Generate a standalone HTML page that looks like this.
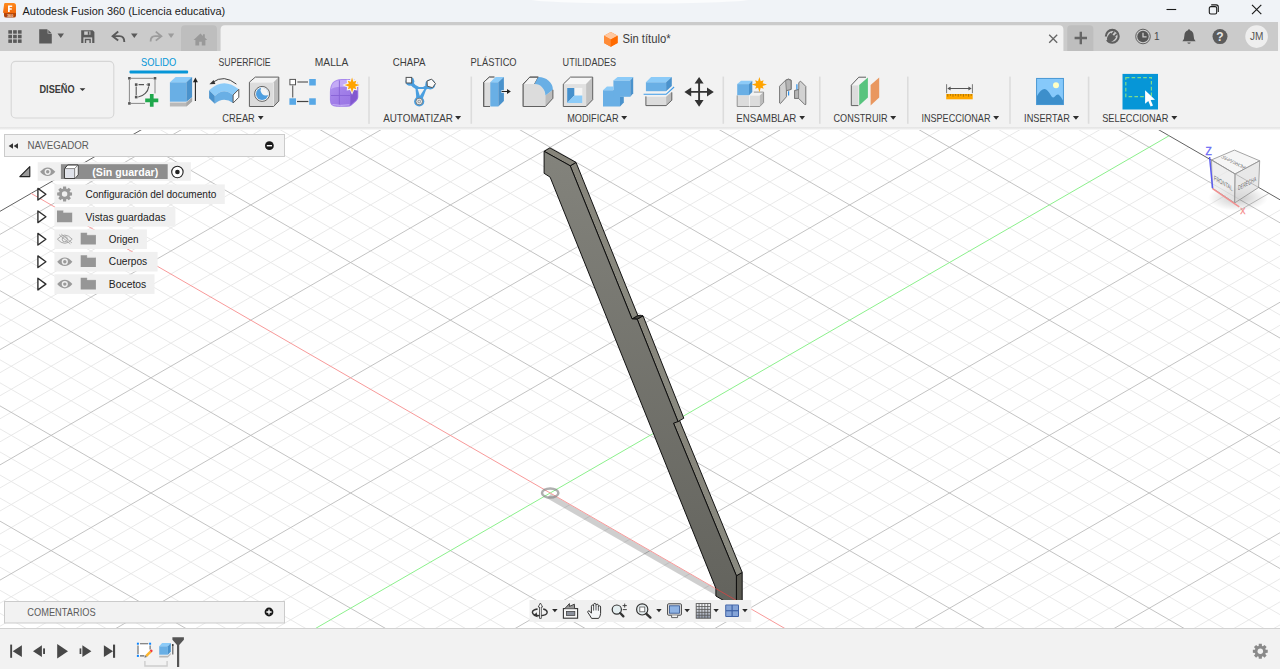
<!DOCTYPE html>
<html lang="es"><head><meta charset="utf-8"><title>Autodesk Fusion 360 (Licencia educativa)</title>
<style>
html,body{margin:0;padding:0;background:#fff;overflow:hidden}
svg{display:block;font-family:'Liberation Sans', sans-serif}
text{white-space:pre}
</style></head><body>
<svg width="1280" height="669" viewBox="0 0 1280 669">
<rect x="0" y="0" width="1280" height="22" fill="#f0f3f7"/>
<ellipse cx="640" cy="-1" rx="112" ry="4.5" fill="#fff" fill-opacity="0.7"/>
<rect x="0" y="22" width="1280" height="29" fill="#cbcbcb"/>
<rect x="0" y="51" width="1280" height="76" fill="#f2f2f2"/>
<rect x="0" y="127" width="1280" height="501.5" fill="#ffffff"/>
<defs><clipPath id="vp"><rect x="0" y="127" width="1280" height="501"/></clipPath>
<clipPath id="gridclip"><polygon points="650.0,-163.9 2766.3,1057.7 550.2,2336.8 -1566.1,1115.3"/></clipPath>
<linearGradient id="topshadow" x1="0" y1="0" x2="0" y2="1"><stop offset="0" stop-color="#e3e3e3"/><stop offset="0.6" stop-color="#ececec"/><stop offset="1" stop-color="#fbfbfb"/></linearGradient>
<linearGradient id="bodyfront" x1="0" y1="0" x2="0" y2="1"><stop offset="0" stop-color="#83837c"/><stop offset="1" stop-color="#63635d"/></linearGradient>
<linearGradient id="bodyside" x1="0" y1="0" x2="0" y2="1"><stop offset="0" stop-color="#86847a"/><stop offset="1" stop-color="#8a8a80"/></linearGradient>
</defs>
<g clip-path="url(#vp)">
<g clip-path="url(#gridclip)">
<path d="M-1146.82 873.29L769.82 1979.60M-1126.86 861.77L789.78 1968.07M-1106.89 850.24L809.75 1956.55M-1086.93 838.72L829.71 1945.02M-1047.00 815.67L869.64 1921.98M-1027.03 804.15L889.61 1910.45M-1007.07 792.62L909.57 1898.93M-987.11 781.10L929.53 1887.40M-947.17 758.05L969.47 1864.36M-927.21 746.53L989.43 1852.83M-907.25 735.00L1009.39 1841.31M-887.28 723.48L1029.36 1829.78M-847.35 700.43L1069.29 1806.74M-827.38 688.91L1089.26 1795.21M-807.42 677.38L1109.22 1783.69M-787.45 665.86L1129.18 1772.16M-747.52 642.81L1169.12 1749.12M-727.56 631.29L1189.08 1737.59M-707.60 619.76L1209.05 1726.07M-687.63 608.24L1229.01 1714.54M-647.70 585.19L1268.94 1691.50M-627.74 573.67L1288.90 1679.97M-607.77 562.14L1308.87 1668.45M-587.80 550.62L1328.84 1656.92M-547.88 527.57L1368.76 1633.88M-527.91 516.05L1388.73 1622.35M-507.94 504.52L1408.70 1610.83M-487.98 493.00L1428.66 1599.30M-448.05 469.95L1468.59 1576.26M-428.08 458.43L1488.56 1564.73M-408.12 446.90L1508.52 1553.21M-388.15 435.38L1528.49 1541.68M-348.22 412.33L1568.41 1518.64M-328.26 400.81L1588.38 1507.11M-308.29 389.28L1608.35 1495.59M-288.33 377.76L1628.31 1484.06M-248.40 354.71L1668.24 1461.02M-228.44 343.19L1688.20 1449.49M-208.47 331.66L1708.17 1437.97M-188.50 320.14L1728.13 1426.44M-148.57 297.09L1768.07 1403.40M-128.61 285.57L1788.03 1391.87M-108.64 274.04L1807.99 1380.35M-88.68 262.52L1827.96 1368.82M-48.75 239.47L1867.89 1345.78M-28.78 227.95L1887.86 1334.25M-8.82 216.42L1907.82 1322.73M11.14 204.90L1927.78 1311.20M51.08 181.85L1967.72 1288.16M71.04 170.33L1987.68 1276.63M91.00 158.80L2007.64 1265.11M110.97 147.28L2027.61 1253.58M150.90 124.23L2067.54 1230.54M170.87 112.71L2087.51 1219.01M190.83 101.18L2107.47 1207.49M210.79 89.66L2127.43 1195.96M250.73 66.61L2167.36 1172.92M270.69 55.09L2187.33 1161.39M290.66 43.56L2207.30 1149.87M310.62 32.04L2227.26 1138.34M350.55 8.99L2267.19 1115.30M370.51 -2.53L2287.15 1103.77M390.48 -14.06L2307.12 1092.25M410.45 -25.58L2327.09 1080.72M450.38 -48.63L2367.01 1057.68M470.34 -60.15L2386.98 1046.15M490.30 -71.68L2406.94 1034.63M510.27 -83.20L2426.91 1023.10M550.20 -106.25L2466.84 1000.06M570.17 -117.77L2486.81 988.53M590.13 -129.30L2506.77 977.01M610.09 -140.82L2526.73 965.48M-1126.86 907.86L689.96 -140.82M-1106.89 919.39L709.92 -129.30M-1086.93 930.91L729.88 -117.77M-1066.97 942.44L749.85 -106.25M-1027.04 965.48L789.78 -83.20M-1007.07 977.01L809.75 -71.68M-987.11 988.53L829.71 -60.15M-967.14 1000.06L849.67 -48.63M-927.21 1023.10L889.61 -25.58M-907.25 1034.63L909.57 -14.06M-887.28 1046.15L929.54 -2.53M-867.32 1057.68L949.50 8.99M-827.38 1080.72L989.43 32.04M-807.42 1092.25L1009.39 43.56M-787.46 1103.77L1029.36 55.09M-767.49 1115.30L1049.33 66.61M-727.56 1138.34L1089.26 89.66M-707.60 1149.87L1109.22 101.18M-687.63 1161.39L1129.18 112.71M-667.67 1172.92L1149.15 124.23M-627.74 1195.96L1189.08 147.28M-607.77 1207.49L1209.05 158.80M-587.81 1219.01L1229.01 170.33M-567.84 1230.54L1248.97 181.85M-527.91 1253.58L1288.90 204.90M-507.95 1265.11L1308.87 216.42M-487.98 1276.63L1328.84 227.95M-468.02 1288.16L1348.80 239.47M-428.09 1311.20L1388.73 262.52M-408.12 1322.73L1408.69 274.04M-388.16 1334.25L1428.66 285.57M-368.19 1345.78L1448.62 297.09M-328.26 1368.82L1488.56 320.14M-308.30 1380.35L1508.52 331.66M-288.33 1391.87L1528.49 343.19M-268.37 1403.40L1548.45 354.71M-228.44 1426.44L1588.38 377.76M-208.47 1437.97L1608.35 389.28M-188.51 1449.49L1628.31 400.81M-168.54 1461.02L1648.28 412.33M-128.61 1484.06L1688.20 435.38M-108.65 1495.59L1708.17 446.90M-88.68 1507.11L1728.13 458.43M-68.72 1518.64L1748.10 469.95M-28.79 1541.68L1788.03 493.00M-8.82 1553.21L1807.99 504.52M11.14 1564.73L1827.96 516.05M31.11 1576.26L1847.92 527.57M71.04 1599.30L1887.86 550.62M91.00 1610.83L1907.82 562.14M110.97 1622.35L1927.78 573.67M130.93 1633.88L1947.75 585.19M170.86 1656.92L1987.68 608.24M190.83 1668.45L2007.64 619.76M210.79 1679.97L2027.61 631.29M230.76 1691.50L2047.58 642.81M270.69 1714.54L2087.51 665.86M290.65 1726.07L2107.47 677.38M310.62 1737.59L2127.43 688.91M330.58 1749.12L2147.40 700.43M370.51 1772.16L2187.33 723.48M390.48 1783.69L2207.30 735.00M410.44 1795.21L2227.26 746.53M430.41 1806.74L2247.22 758.05M470.34 1829.78L2287.15 781.10M490.30 1841.31L2307.12 792.62M510.27 1852.83L2327.09 804.15M530.23 1864.36L2347.05 815.67M570.16 1887.40L2386.98 838.72M590.13 1898.93L2406.94 850.24M610.10 1910.45L2426.91 861.77M630.06 1921.98L2446.88 873.29M669.99 1945.02L2486.81 896.34M689.95 1956.55L2506.77 907.86M709.92 1968.07L2526.73 919.39M729.88 1979.60L2546.70 930.91" stroke="#e5e5e5" stroke-width="0.85" fill="none"/>
<path d="M-1166.79 884.82L749.85 1991.12M-1066.97 827.20L849.67 1933.50M-967.14 769.58L949.50 1875.88M-867.31 711.96L1049.33 1818.26M-767.49 654.34L1149.15 1760.64M-667.66 596.72L1248.97 1703.02M-567.84 539.10L1348.80 1645.40M-468.01 481.48L1448.62 1587.78M-368.19 423.86L1548.45 1530.16M-268.37 366.24L1648.28 1472.54M-168.54 308.62L1748.10 1414.92M-68.71 251.00L1847.92 1357.30M130.94 135.76L2047.58 1242.06M230.76 78.14L2147.40 1184.44M330.59 20.52L2247.22 1126.82M430.41 -37.10L2347.05 1069.20M530.24 -94.72L2446.88 1011.58M630.06 -152.34L2546.70 953.96M-1146.83 896.34L669.99 -152.34M-1047.00 953.96L769.82 -94.72M-947.18 1011.58L869.64 -37.10M-847.35 1069.20L969.47 20.52M-747.53 1126.82L1069.29 78.14M-547.88 1242.06L1268.94 193.38M-448.05 1299.68L1368.77 251.00M-348.23 1357.30L1468.59 308.62M-248.40 1414.92L1568.41 366.24M-148.58 1472.54L1668.24 423.86M-48.75 1530.16L1768.07 481.48M51.07 1587.78L1867.89 539.10M150.90 1645.40L1967.72 596.72M250.72 1703.02L2067.54 654.34M350.55 1760.64L2167.36 711.96M450.38 1818.26L2267.19 769.58M550.20 1875.88L2367.02 827.20M650.02 1933.50L2466.84 884.82" stroke="#bcbcbc" stroke-width="0.9" fill="none"/>
</g>
<path d="M650.02 -163.87L2566.66 942.44" stroke="#626262" stroke-width="1"/>
<path d="M-1166.79 884.82L650.02 -163.87" stroke="#626262" stroke-width="1"/>
<polygon points="551,493.8 716.2,588.9 716.2,595.6 547,498.2" fill="#000" fill-opacity="0.19"/>
<path d="M-647.70 1184.44L1169.12 135.76" stroke="#8cf08c" stroke-width="1"/>
<path d="M31.11 193.38L1947.75 1299.68" stroke="#f89a9a" stroke-width="1"/>
<ellipse cx="550.2" cy="493.0" rx="8.2" ry="4.6" fill="none" stroke="#808080" stroke-opacity="0.62" stroke-width="2.5"/>
<polygon points="736.4,575.8 736.4,606.0 742.2,602.6 742.2,572.4" fill="#595850" stroke="#0a0a0a" stroke-width="0.95" stroke-linejoin="round" />
<polygon points="673.5,423.2 736.4,575.8 742.2,572.4 679.3,419.8" fill="url(#bodyside)" stroke="#0a0a0a" stroke-width="0.95" stroke-linejoin="round" />
<polygon points="637.2,319.2 678.0,421.6 683.8,418.2 643.0,315.8" fill="url(#bodyside)" stroke="#0a0a0a" stroke-width="0.95" stroke-linejoin="round" />
<polygon points="632.0,318.9 637.2,319.2 643.0,315.8 637.8,315.5" fill="#45453f" stroke="#0a0a0a" stroke-width="0.95" stroke-linejoin="round" />
<polygon points="570.2,165.8 632.0,318.9 637.8,315.5 576.0,162.4" fill="url(#bodyside)" stroke="#0a0a0a" stroke-width="0.95" stroke-linejoin="round" />
<polygon points="544.1,151.3 570.2,165.8 576.0,162.4 549.9,147.9" fill="#86847a" stroke="#0a0a0a" stroke-width="0.95" stroke-linejoin="round" />
<polygon points="544.1,151.3 570.2,165.8 632.0,318.9 637.2,319.2 678.0,421.6 673.5,423.2 736.4,575.8 736.4,606.0 733.0,606.0 715.9,596.0 715.9,588.4 550.1,177.1 544.1,173.3" fill="url(#bodyfront)" stroke="#0a0a0a" stroke-width="0.95" stroke-linejoin="round"/>
<path d="M715.9 588.6L737 600.8" stroke="#e04040" stroke-width="1" stroke-opacity="0.75"/>
<defs><radialGradient id="vcshadow"><stop offset="0" stop-color="#000" stop-opacity="0.22"/><stop offset="1" stop-color="#000" stop-opacity="0"/></radialGradient></defs>
<ellipse cx="1238" cy="198" rx="30" ry="13" fill="url(#vcshadow)"/>
<polygon points="1211.5,159.9 1234.4,150.1 1259.7,160.8 1235.1,174.0" fill="#f2f2f2" fill-opacity="0.7" stroke="#8f8f8f" stroke-width="0.8" stroke-linejoin="round"/>
<polygon points="1211.5,159.9 1235.1,174.0 1234.7,202.9 1212.2,188.1" fill="#e8e8e8" fill-opacity="0.7" stroke="#8f8f8f" stroke-width="0.8" stroke-linejoin="round"/>
<polygon points="1235.1,174.0 1259.7,160.8 1258.6,187.5 1234.7,202.9" fill="#dedede" fill-opacity="0.7" stroke="#8f8f8f" stroke-width="0.8" stroke-linejoin="round"/>
<text transform="matrix(1,0.5,-0.85,0.42,1220.6,157.6)" font-size="6" fill="#555" fill-opacity="0.9" textLength="22.5" lengthAdjust="spacingAndGlyphs">SUPERIOR</text>
<text transform="matrix(1,0.6,0,1,1214,179.9)" font-size="7" fill="#555" fill-opacity="0.9" textLength="18.5" lengthAdjust="spacingAndGlyphs">FRONTAL</text>
<text transform="matrix(1,-0.53,0,1,1238.1,190.6)" font-size="7" fill="#555" fill-opacity="0.9" textLength="18" lengthAdjust="spacingAndGlyphs">DERECHA</text>
<path d="M1212.6 188.3L1209.6 157" stroke="#5b5bf0" stroke-width="1.5"/>
<path d="M1212.6 188.6L1239.3 206.8" stroke="#f29090" stroke-width="1.5"/>
<text x="1205.4" y="154.7" font-size="10.2" fill="#6a6af5" stroke="#6a6af5" stroke-width="0.35">Z</text>
<text x="1240.2" y="213.9" font-size="9.6" fill="#f58a8a" stroke="#f58a8a" stroke-width="0.3" textLength="5.2" lengthAdjust="spacingAndGlyphs">X</text>
<rect x="0" y="127" width="1280" height="3" fill="url(#topshadow)"/>
</g>
<defs><linearGradient id="lg_logo" x1="0" y1="0" x2="0" y2="1"><stop offset="0" stop-color="#ff8a1e"/><stop offset="0.68" stop-color="#f26a0c"/><stop offset="0.69" stop-color="#b8480a"/><stop offset="1" stop-color="#a84008"/></linearGradient></defs>
<path d="M4.2 3.6Q4.4 3 5.2 3H13.4Q16 3 16 5.6V15.4Q16 17.6 13.8 17.6H6.2Q4 17.6 4 15.4V13.2L3 12.4Z" fill="url(#lg_logo)"/>
<path d="M8 5.4H12.2V6.9H9.7V8.3H11.8V9.7H9.7V12H8Z" fill="#fff"/>
<text x="6.9" y="16.5" font-size="3.6" font-weight="bold" fill="#ffd9bf" textLength="6.4" lengthAdjust="spacingAndGlyphs">360</text>
<text x="22.6" y="14.9" font-size="11.6" fill="#1a1a1a" textLength="202.6" lengthAdjust="spacingAndGlyphs" >Autodesk Fusion 360 (Licencia educativa)</text>
<path d="M1166.5 9.5H1176.2" stroke="#1a1a1a" stroke-width="1.1"/>
<rect x="1209.3" y="6.6" width="7.4" height="7.4" rx="1.6" fill="none" stroke="#1a1a1a" stroke-width="1.1"/>
<path d="M1211.2 4.9H1216.2Q1218.3 4.9 1218.3 7V12" fill="none" stroke="#1a1a1a" stroke-width="1.1"/>
<path d="M1252 4.8L1261.3 14.1M1261.3 4.8L1252 14.1" stroke="#1a1a1a" stroke-width="1.15"/>
<path d="M181 51V29Q181 25.2 185 25.2H213Q217 25.2 217 29V51Z" fill="#bebebe"/>
<path d="M220.6 51V29.5Q220.6 25.2 225 25.2H1059Q1063.4 25.2 1063.4 29.5V51Z" fill="#f2f2f2"/>
<path d="M1067.2 51V29Q1067.2 25.2 1071 25.2H1089.5Q1093.4 25.2 1093.4 29V51Z" fill="#bebebe"/>
<rect x="1278" y="22" width="2" height="29" fill="#f2f2f2"/>
<rect x="8.3" y="30.2" width="3.7" height="3.5" fill="#5a5a5a"/>
<rect x="13.1" y="30.2" width="3.7" height="3.5" fill="#5a5a5a"/>
<rect x="17.9" y="30.2" width="3.7" height="3.5" fill="#5a5a5a"/>
<rect x="8.3" y="34.8" width="3.7" height="3.5" fill="#5a5a5a"/>
<rect x="13.1" y="34.8" width="3.7" height="3.5" fill="#5a5a5a"/>
<rect x="17.9" y="34.8" width="3.7" height="3.5" fill="#5a5a5a"/>
<rect x="8.3" y="39.4" width="3.7" height="3.5" fill="#5a5a5a"/>
<rect x="13.1" y="39.4" width="3.7" height="3.5" fill="#5a5a5a"/>
<rect x="17.9" y="39.4" width="3.7" height="3.5" fill="#5a5a5a"/>
<path d="M39.2 29.3H47.2L51.8 33.9V43.6H39.2Z" fill="#5a5a5a"/><path d="M47.6 29.3V33.5H51.8Z" fill="#cbcbcb"/><path d="M48.3 29.9L51.3 32.9H48.3Z" fill="#5a5a5a"/>
<path d="M57.5 33.6H64L60.75 37.9Z" fill="#5a5a5a"/>
<path d="M81.2 30.2H92.6L94.4 32V43H81.2Z" fill="#5a5a5a"/><rect x="84.2" y="31.4" width="6.2" height="3.4" fill="#cbcbcb"/><rect x="87.8" y="31.4" width="1.6" height="3.4" fill="#5a5a5a"/><rect x="83.4" y="37.4" width="8.8" height="5.6" fill="#cbcbcb"/><rect x="84.8" y="38.8" width="6" height="4.2" fill="#5a5a5a"/><rect x="86.2" y="40.2" width="3.2" height="2.8" fill="#cbcbcb"/>
<path d="M118.2 31.6L112.6 36.2L118.2 40.6" fill="none" stroke="#5a5a5a" stroke-width="1.9" stroke-linejoin="miter"/><path d="M113.4 36.1H119.6Q124.3 36.1 124.3 41.9" fill="none" stroke="#5a5a5a" stroke-width="1.9"/>
<path d="M131 33.6H137.6L134.3 37.9Z" fill="#5a5a5a"/>
<path d="M155.8 31.6L161.4 36.2L155.8 40.6" fill="none" stroke="#9c9c9c" stroke-width="1.8"/><path d="M160.6 36.1H155Q150.6 36.1 150.6 41.6" fill="none" stroke="#9c9c9c" stroke-width="1.8"/>
<path d="M168 33.6H174.2L171.1 37.9Z" fill="#9c9c9c"/>
<path d="M193.6 40L200.4 33.4L203 35.9V34.2H204.8V37.6L207.2 40H205.4V45.6H201.8V41.8H199.2V45.6H195.4V40Z" fill="#999"/>
<path d="M610.8 32L617.6 35.7V43.1L610.8 46.8L604 43.1V35.7Z" fill="#ff7a1a"/><path d="M610.8 32L617.6 35.7L610.8 39.4L604 35.7Z" fill="#ffc8a0"/><path d="M604 35.7L610.8 39.4V46.8L604 43.1Z" fill="#ff8c38"/><path d="M617.6 35.7L610.8 39.4V46.8L617.6 43.1Z" fill="#ff6a00"/>
<text x="622.4" y="43" font-size="12" fill="#3c3c3c" textLength="48.2" lengthAdjust="spacingAndGlyphs" >Sin título*</text>
<path d="M1049.2 34.8L1057.2 42.8M1057.2 34.8L1049.2 42.8" stroke="#666" stroke-width="1.3"/>
<path d="M1074.6 38H1087M1080.8 31.8V44.2" stroke="#666" stroke-width="2.4"/>
<circle cx="1112.3" cy="36.3" r="6.4" fill="none" stroke="#5e5e5e" stroke-width="2.1" stroke-dasharray="36.6 3.6" stroke-dashoffset="-19.4"/>
<g transform="rotate(40 1112.3 36.3)" fill="#5e5e5e"><path d="M1108.6 34.9H1116V37.4Q1116 42.6 1112.3 42.6Q1108.6 42.6 1108.6 37.4Z"/><rect x="1109.8" y="31.4" width="1.5" height="4"/><rect x="1113.3" y="31.4" width="1.5" height="4"/></g>
<circle cx="1143" cy="36.5" r="7.3" fill="none" stroke="#555" stroke-width="0.9"/><circle cx="1143" cy="36.5" r="5.7" fill="#555"/><path d="M1143 32.8V36.9H1146.6" fill="none" stroke="#cbcbcb" stroke-width="1.3"/>
<text x="1154.0" y="40.2" font-size="10" fill="#4a4a4a" >1</text>
<path d="M1189 29.2Q1190 29.2 1190 30.3Q1193.6 31.4 1193.6 35.6Q1193.6 39.6 1195.6 41.2H1182.4Q1184.4 39.6 1184.4 35.6Q1184.4 31.4 1188 30.3Q1188 29.2 1189 29.2Z" fill="#555"/><path d="M1187.3 42.4H1190.7Q1190.4 43.8 1189 43.8Q1187.6 43.8 1187.3 42.4Z" fill="#555"/>
<circle cx="1220" cy="36.6" r="7.5" fill="#5c5c5c"/>
<text x="1220" y="41" font-size="12" font-weight="bold" fill="#e6e6e6" text-anchor="middle">?</text>
<circle cx="1256.6" cy="36.6" r="11.3" fill="#eeeeee"/>
<text x="1256.6" y="40.4" font-size="10.4" fill="#555" text-anchor="middle" textLength="13.4" lengthAdjust="spacingAndGlyphs">JM</text>
<rect x="11.2" y="61.4" width="102.6" height="56.6" rx="4.5" fill="#f2f2f2" stroke="#d6d6d6" stroke-width="1.1"/>
<text x="39.5" y="93" font-size="10.4" fill="#3a3a3a" textLength="35.1" lengthAdjust="spacingAndGlyphs" font-weight="bold" >DISEÑO</text>
<path d="M79.6 88.2H85.4L82.5 91Z" fill="#333"/>
<text x="141" y="65.6" font-size="10.2" fill="#0696d7" textLength="35.2" lengthAdjust="spacingAndGlyphs" >SOLIDO</text>
<rect x="129.5" y="70.4" width="58.6" height="3.1" rx="1" fill="#0696d7"/>
<text x="218.6" y="65.6" font-size="10.2" fill="#3c3c3c" textLength="52.0" lengthAdjust="spacingAndGlyphs" >SUPERFICIE</text>
<text x="314.8" y="65.6" font-size="10.2" fill="#3c3c3c" textLength="33.6" lengthAdjust="spacingAndGlyphs" >MALLA</text>
<text x="392.8" y="65.6" font-size="10.2" fill="#3c3c3c" textLength="32.6" lengthAdjust="spacingAndGlyphs" >CHAPA</text>
<text x="470.6" y="65.6" font-size="10.2" fill="#3c3c3c" textLength="46.0" lengthAdjust="spacingAndGlyphs" >PLÁSTICO</text>
<text x="562.6" y="65.6" font-size="10.2" fill="#3c3c3c" textLength="53.6" lengthAdjust="spacingAndGlyphs" >UTILIDADES</text>
<text x="222.3" y="121.7" font-size="10.2" fill="#3c3c3c" textLength="32.5" lengthAdjust="spacingAndGlyphs" >CREAR</text>
<path d="M257.90000000000003 116.1H263.59999999999997L260.75 119.7Z" fill="#2e2e2e"/>
<text x="383.2" y="121.7" font-size="10.2" fill="#3c3c3c" textLength="69.7" lengthAdjust="spacingAndGlyphs" >AUTOMATIZAR</text>
<path d="M455.1 116.1H461.09999999999997L458.1 119.7Z" fill="#2e2e2e"/>
<text x="567.2" y="121.7" font-size="10.2" fill="#3c3c3c" textLength="51.4" lengthAdjust="spacingAndGlyphs" >MODIFICAR</text>
<path d="M621.1999999999999 116.1H627.2L624.2 119.7Z" fill="#2e2e2e"/>
<text x="736.3" y="121.7" font-size="10.2" fill="#3c3c3c" textLength="60.0" lengthAdjust="spacingAndGlyphs" >ENSAMBLAR</text>
<path d="M799.3 116.1H805.0L802.15 119.7Z" fill="#2e2e2e"/>
<text x="833.5" y="121.7" font-size="10.2" fill="#3c3c3c" textLength="54.1" lengthAdjust="spacingAndGlyphs" >CONSTRUIR</text>
<path d="M890.1999999999999 116.1H896.2L893.2 119.7Z" fill="#2e2e2e"/>
<text x="921.4" y="121.7" font-size="10.2" fill="#3c3c3c" textLength="69.1" lengthAdjust="spacingAndGlyphs" >INSPECCIONAR</text>
<path d="M993.1999999999999 116.1H999.1L996.15 119.7Z" fill="#2e2e2e"/>
<text x="1024.1" y="121.7" font-size="10.2" fill="#3c3c3c" textLength="45.7" lengthAdjust="spacingAndGlyphs" >INSERTAR</text>
<path d="M1072.8999999999999 116.1H1079.0L1075.9499999999998 119.7Z" fill="#2e2e2e"/>
<text x="1102.2" y="121.7" font-size="10.2" fill="#3c3c3c" textLength="66.2" lengthAdjust="spacingAndGlyphs" >SELECCIONAR</text>
<path d="M1171.3 116.1H1177.3L1174.3 119.7Z" fill="#2e2e2e"/>
<rect x="368.2" y="76.6" width="1.6" height="47.2" fill="#dcdcdc"/>
<rect x="470.5" y="76.6" width="1.6" height="47.2" fill="#dcdcdc"/>
<rect x="722.5" y="76.6" width="1.6" height="47.2" fill="#dcdcdc"/>
<rect x="819.0" y="76.6" width="1.6" height="47.2" fill="#dcdcdc"/>
<rect x="907.0" y="76.6" width="1.6" height="47.2" fill="#dcdcdc"/>
<rect x="1009.2" y="76.6" width="1.6" height="47.2" fill="#dcdcdc"/>
<rect x="1087.8" y="76.6" width="1.6" height="47.2" fill="#dcdcdc"/>
<rect x="128.1" y="77.0" width="2.6" height="2.6" fill="#555"/>
<rect x="153.7" y="77.0" width="2.6" height="2.6" fill="#555"/>
<rect x="128.1" y="102.10000000000001" width="2.6" height="2.6" fill="#555"/>
<path d="M131 78.3H153.6M129.4 80V101.8M155 80V93.4M131 103.4H145" stroke="#7c7c7c" stroke-width="0.9" fill="none"/>
<rect x="134.89999999999998" y="83.3" width="2.6" height="2.6" fill="#555"/>
<rect x="147.39999999999998" y="83.3" width="2.6" height="2.6" fill="#555"/>
<rect x="134.89999999999998" y="95.8" width="2.6" height="2.6" fill="#555"/>
<path d="M138.6 84.6H146.4" stroke="#555" stroke-width="1.1" stroke-dasharray="5.4 2"/>
<path d="M136.2 86.6V95.2" stroke="#555" stroke-width="1.1"/>
<path d="M148.8 86.4A12.4 12.4 0 0 1 138.2 97" stroke="#555" stroke-width="1.1" fill="none"/>
<path d="M145.2 98.5H149.9V94H153.6V98.5H158.3V102.2H153.6V106.8H149.9V102.2H145.2Z" fill="#1fa84c"/>
<polygon points="169.9,102.6 186.4,102.6 192.1,97.8 192.1,101.6 186.4,106.5 169.9,106.5" fill="#b9b9b9" />
<polygon points="186.4,102.6 192.1,97.8 192.1,101.6 186.4,106.5" fill="#a8a8a8" />
<polygon points="169.9,82.2 186.4,82.2 186.4,101.7 169.9,101.7" fill="#69afe5" />
<polygon points="169.9,82.2 175.6,77.1 192.1,77.1 186.4,82.2" fill="#8ccbf8" />
<polygon points="186.4,82.2 192.1,77.1 192.1,97.2 186.4,101.7" fill="#4a92cc" />
<path d="M195.4 80.5V101" stroke="#222" stroke-width="1.1"/><path d="M192.9 82.2L195.4 77.6L197.9 82.2Z" fill="#222"/>
<path d="M236.4 84.1Q224 74 212.6 82.4" stroke="#444" stroke-width="1" fill="none"/><path d="M209.4 84.2L213.6 80L215.4 84Z" fill="#333"/>
<path d="M209.1 90.3Q223.5 76.6 238.8 89.3L233.1 95Q223.5 87 214.8 95.9Z" fill="#8ccbf8"/>
<path d="M214.8 95.9Q223.5 87 233.1 95V103Q223.5 96 214.8 103.7Z" fill="#69afe5"/>
<polygon points="209.1,90.3 214.8,95.9 214.8,103.7 209.1,98.3" fill="#4a92cc" />
<polygon points="233.1,95 238.8,89.3 238.8,97.3 233.1,103" fill="#fff" stroke="#555" stroke-width="1" stroke-linejoin="round" />
<polygon points="249.4,82.2 273.6,82.2 273.6,106.5 249.4,106.5" fill="#dcdcdc" />
<polygon points="249.4,82.2 255.3,77.1 278.8,77.1 273.6,82.2" fill="#f3f3f3" />
<polygon points="273.6,82.2 278.8,77.1 278.8,101.1 273.6,106.5" fill="#bcbcbc" />
<path d="M250 82.6H273.4V106" stroke="#ececec" stroke-width="0.8" fill="none"/>
<path d="M249.4 82.2L255.3 77.1H278.8V101.1L273.6 106.5H249.4Z" fill="none" stroke="#606060" stroke-width="1" stroke-linejoin="round"/>
<defs><clipPath id="holeclip"><circle cx="262.1" cy="93.9" r="6.1"/></clipPath></defs>
<circle cx="262.1" cy="93.9" r="7.5" fill="#f4f4f4" stroke="#555" stroke-width="0.9"/>
<circle cx="262.1" cy="93.9" r="6.1" fill="#4f9fe0"/>
<circle cx="265.9" cy="90.2" r="5.3" fill="#f4f4f4" clip-path="url(#holeclip)"/>
<path d="M297.4 82H308" stroke="#808080" stroke-width="1.6"/><path d="M292.7 85.6V97.6" stroke="#666" stroke-width="1.2"/><path d="M297 101.5H308.4" stroke="#444" stroke-width="1.2"/>
<rect x="289.9" y="79.4" width="5.6" height="5.4" fill="#fff" stroke="#555" stroke-width="1"/>
<rect x="309.2" y="79" width="6.6" height="6.5" fill="#58a8e6"/>
<rect x="289.4" y="98.3" width="6.6" height="6.5" fill="#58a8e6"/>
<rect x="309.2" y="98.3" width="6.6" height="6.5" fill="#58a8e6"/>
<defs><linearGradient id="lg_form" x1="0" y1="0" x2="1" y2="1"><stop offset="0" stop-color="#b195f0"/><stop offset="0.5" stop-color="#a07de8"/><stop offset="1" stop-color="#9771e2"/></linearGradient></defs>
<path d="M329.9 92Q329.9 79.2 341.5 79L352 79Q358.3 79.4 358.3 87V97.2Q358.2 99.4 356.4 101L351.4 105.6Q350 106.8 347 106.8H336.6Q329.9 106.8 329.9 100Z" fill="url(#lg_form)"/>
<path d="M331 89.5Q331.6 80.4 341.6 80.1H352.5Q357.2 80.4 357.2 86L350.2 88.2Q347 86.8 341 86.8Q333.4 86.8 331 89.5Z" fill="#c4abf6"/>
<path d="M350.4 89.6Q351 88.4 357.3 86.6V97Q357.2 98.8 355.8 100.2L350.4 105.2Z" fill="#8259cf"/>
<path d="M331 95.5H350.2M339.4 80.4V106.2" stroke="#8762d6" stroke-width="0.9" fill="none"/>
<path d="M332.6 104.6Q340 106 349.4 104.8" stroke="#c9b3f7" stroke-width="1" fill="none"/>
<polygon points="352.05,75.5 354.12,80.11 357.42,79.73 357.04,83.03 361.65,85.1 357.04,87.17 357.42,90.47 354.12,90.09 352.05,94.7 349.98,90.09 346.68,90.47 347.06,87.17 342.45,85.1 347.06,83.03 346.68,79.73 349.98,80.11" fill="#f2f2f2" />
<polygon points="352.05,77.5 353.39,81.87 356.29,80.86 355.28,83.76 359.65,85.1 355.28,86.44 356.29,89.34 353.39,88.33 352.05,92.7 350.71,88.33 347.81,89.34 348.82,86.44 344.45,85.1 348.82,83.76 347.81,80.86 350.71,81.87" fill="#ffa400" />
<circle cx="409.9" cy="81.3" r="4.4" fill="#4a9fe0"/><circle cx="430.3" cy="84.4" r="5" fill="#4a9fe0"/>
<path d="M410.4 82Q413.6 86.6 418 88.4M430 85Q427 87.4 424 88.4" stroke="#4a9fe0" stroke-width="3.6" fill="none" stroke-linecap="round"/>
<path d="M416 87L425.6 87L426.2 89.4L422.4 99.6H416.4L415.6 89.4Z" fill="#4a9fe0"/>
<circle cx="419.2" cy="101.5" r="5.1" fill="#4a9fe0"/>
<path d="M417.7 88.9H424.3L419.9 96Z" fill="#f2f2f2"/>
<rect x="406.1" y="77.4" width="5.6" height="5.6" fill="#fafafa" stroke="#555" stroke-width="1"/>
<path d="M431.6 79.1L435.5 83.6L432.5 87.7L427.3 86.2L427 81.1Z" fill="#fafafa" stroke="#555" stroke-width="1" stroke-linejoin="round"/>
<circle cx="419.2" cy="101.5" r="3.3" fill="#f2f2f2" stroke="#6a6a6a" stroke-width="0.8"/><circle cx="419.2" cy="101.5" r="1.4" fill="#e4e4e4" stroke="#777" stroke-width="0.7"/>
<path d="M490 106.5H483.7V82.2L489.3 77.1H494.4" fill="#dcdcdc" stroke="#606060" stroke-width="1"/>
<polygon points="483.9,82.4 489.4,77.3 495,77.3 490,82.4" fill="#f3f3f3" />
<path d="M490 106.5H483.7V82.2L489.3 77.1H494.4" fill="none" stroke="#606060" stroke-width="1"/>
<polygon points="490.3,82.2 498.3,82.2 498.3,106.5 490.3,106.5" fill="#69afe5" />
<polygon points="490.3,82.2 495.6,77.1 503.9,77.1 498.3,82.2" fill="#8ccbf8" />
<polygon points="498.3,82.2 503.9,77.1 503.9,101.1 498.3,106.5" fill="#4a92cc" />
<path d="M501.4 91.5H508" stroke="#fff" stroke-width="2.6"/><path d="M501.6 91.5H508" stroke="#222" stroke-width="1.1"/><path d="M507 89L510.9 91.5L507 94Z" fill="#222"/>
<path d="M523.2 106.5V84.1L529.8 77.1H538.3L534.5 84.1" fill="#f3f3f3" stroke="#606060" stroke-width="1" stroke-linejoin="round"/>
<path d="M523.2 106.5V84.1H534.5A10.9 11.3 0 0 1 545.4 95.4V106.5Z" fill="#dcdcdc"/>
<path d="M545.4 95.4L552.9 89.8V98.3L545.4 106.5Z" fill="#bcbcbc"/>
<path d="M534.5 84.1L538.3 77.1A14.6 12.7 0 0 1 552.9 89.8L545.4 95.4A10.9 11.3 0 0 0 534.5 84.1Z" fill="#69afe5"/>
<path d="M538.3 77.1H529.8L523.2 84.1V106.5H545.4L552.9 98.3V89.8" fill="none" stroke="#606060" stroke-width="1" stroke-linejoin="round"/>
<polygon points="563.3,84.1 586.1,84.1 586.1,106.5 563.3,106.5" fill="#e0e0e0" />
<polygon points="563.3,84.1 570.5,77.1 592.7,77.1 586.1,84.1" fill="#f6f6f6" />
<polygon points="586.1,84.1 592.7,77.1 592.7,99.7 586.1,106.5" fill="#c2c2c2" />
<path d="M563.3 84.1L570.5 77.1H592.7V99.7L586.1 106.5H563.3Z" fill="none" stroke="#606060" stroke-width="1" stroke-linejoin="round"/>
<rect x="567.2" y="87.9" width="15.1" height="15.1" fill="#f4f4f4"/>
<polygon points="567.2,87.9 574.3,87.9 574.3,95.4 567.2,103" fill="#4590cc" />
<polygon points="567.2,103 574.3,95.4 582.3,95.4 582.3,103" fill="#8ccbf8" />
<polygon points="613.4,80.4 630.3,80.4 630.3,96.8 613.4,96.8" fill="#69afe5" />
<polygon points="613.4,80.4 617.6,77 633.2,77 630.3,80.4" fill="#8ccbf8" />
<polygon points="630.3,80.4 633.2,77 633.2,93.2 630.3,96.8" fill="#4a92cc" />
<polygon points="603,90.2 620,90.2 620,106.5 603,106.5" fill="#69afe5" />
<polygon points="603,90.2 607,86.4 613.4,86.4 613.4,90.2" fill="#8ccbf8" />
<polygon points="620,96.8 623.8,96.8 623.8,102.6 620,106.5" fill="#4a92cc" />
<polygon points="613.4,90.2 620,90.2 620,96.8 613.4,96.8" fill="#69afe5" />
<polygon points="645.9,82.2 666.1,82.2 666.1,91.2 645.9,91.2" fill="#69afe5" />
<polygon points="645.9,82.2 651.1,77.1 671.8,77.1 666.1,82.2" fill="#8ccbf8" />
<polygon points="666.1,82.2 671.8,77.1 671.8,86 666.1,91.2" fill="#4a92cc" />
<path d="M645.9 96.8H666.1V105.6H645.9Z" fill="#dcdcdc"/><path d="M666.1 96.8L671.8 91.8V100.2L666.1 105.6Z" fill="#bcbcbc"/>
<path d="M645.9 96.4V105.6H666.1L671.8 100.2V92.4" fill="none" stroke="#606060" stroke-width="1" stroke-linejoin="round"/>
<path d="M643.6 94.3H666.1L674.1 87" fill="none" stroke="#3d9be8" stroke-width="1.1"/>
<path d="M699.1 80V104M687 91.9H711" stroke="#333" stroke-width="1.9"/>
<path d="M699.1 76.9L703.6 83.6H694.6ZM699.1 106.7L703.6 100H694.6ZM684.4 91.9L691.2 87.4V96.4ZM713.8 91.9L707 87.4V96.4Z" fill="#333"/>
<polygon points="737.2,95.4 749,95.4 749,106.5 737.2,106.5" fill="#dcdcdc" />
<polygon points="750,95.4 759.8,95.4 759.8,106.5 750,106.5" fill="#dcdcdc" />
<polygon points="750,95.4 753.8,92.1 763.6,92.1 759.8,95.4" fill="#f3f3f3" />
<polygon points="759.8,95.4 763.6,92.1 763.6,102.5 759.8,106.5" fill="#bcbcbc" />
<path d="M737.2 95.4V106.5H759.8L763.6 102.5V92.1H753.8" fill="none" stroke="#8a8a8a" stroke-width="0.9" stroke-linejoin="round"/>
<path d="M749.5 95.4V106.5" stroke="#f2f2f2" stroke-width="1"/>
<polygon points="737.2,84.1 749,84.1 749,95.2 737.2,95.2" fill="#69afe5" />
<polygon points="737.2,84.1 741,80.8 752.3,80.8 749,84.1" fill="#8ccbf8" />
<polygon points="749,84.1 752.3,80.8 752.3,92 749,95.2" fill="#4a92cc" />
<polygon points="759.4,77.0 760.74,81.37 763.64,80.36 762.63,83.26 767.0,84.6 762.63,85.94 763.64,88.84 760.74,87.83 759.4,92.2 758.06,87.83 755.16,88.84 756.17,85.94 751.8,84.6 756.17,83.26 755.16,80.36 758.06,81.37" fill="#ffa400" />
<path d="M779.6 86.2L785.6 80.2Q788.6 77.8 791.2 80.2V89.4L786.4 90.6V96.8L780.4 103.6L779.6 103Z" fill="#d2d2d2" stroke="#6a6a6a" stroke-width="0.9" stroke-linejoin="round"/>
<path d="M785.6 80.4Q788.4 78.4 791 80.4V89.4L786.4 90.6Z" fill="#b4b4b4" stroke="#6a6a6a" stroke-width="0.7"/>
<path d="M798.8 82.6L800.6 81.2L805.8 86.4V104.4L805 104.8L798.6 98.4H794.6V90.6L798.8 89.4Z" fill="#d2d2d2" stroke="#6a6a6a" stroke-width="0.9" stroke-linejoin="round"/>
<path d="M794.6 90.6L798.6 89.6V98.4H794.6Z" fill="#b4b4b4" stroke="#6a6a6a" stroke-width="0.7"/>
<path d="M788.6 91.2V95.6M796.9 84.2V89.6" stroke="#2d8fe8" stroke-width="1.2"/>
<path d="M851.3 85.2V105.6H858.4V85.2Z" fill="#dcdcdc"/><path d="M851.3 85.2L858.8 77.2H866L858.4 85.2Z" fill="#f3f3f3"/>
<path d="M858.4 105.6H851.3V85.2L858.8 77.2H866" fill="none" stroke="#606060" stroke-width="1" stroke-linejoin="round"/>
<polygon points="859.2,85 867.9,77.5 867.9,97.4 859.2,105.4" fill="#58c47e" />
<polygon points="870.6,85 879.2,77.5 879.2,97.4 870.6,105.4" fill="#e9975f" />
<rect x="946.2" y="94" width="26.5" height="5.3" fill="#ffa800"/>
<path d="M947.8 94V96.6M950.4 94V95.8M953.0 94V96.6M955.6 94V95.8M958.2 94V96.6M960.8 94V95.8M963.4 94V96.6M966.0 94V95.8M968.6 94V96.6M971.2 94V95.8" stroke="#8a5a00" stroke-width="0.7"/>
<path d="M946.6 84.2V93.2M972.4 84.2V93.2" stroke="#777" stroke-width="1"/><path d="M949 88.5H970" stroke="#555" stroke-width="1"/>
<path d="M947.3 88.5L950.6 86.4V90.6ZM971.7 88.5L968.4 86.4V90.6Z" fill="#555"/>
<rect x="1036.6" y="78.4" width="26.8" height="26.2" fill="#86c9fb" stroke="#3d90d0" stroke-width="0.9"/>
<path d="M1037 96Q1041 88.8 1044.6 89Q1047.6 89.4 1051.6 96.4Q1053 98.4 1054.6 96.8Q1057.2 93.6 1058.8 94.8Q1061 96.6 1063 100.4V104.2H1037Z" fill="#3d8fcb"/>
<circle cx="1056" cy="85.2" r="3" fill="#ffffc4"/>
<rect x="1122.5" y="73.9" width="35.5" height="35.6" fill="#0696d7"/>
<rect x="1125.8" y="77.6" width="25.6" height="19" fill="none" stroke="#7fdc8a" stroke-width="1.2" stroke-dasharray="3.6 2.2"/>
<path d="M1145.1 90.2V103.8L1148.3 100.9L1150.6 106.6L1153 105.6L1150.6 100.1L1155 99.7Z" fill="#fff"/>
<rect x="4.5" y="134.5" width="280" height="22" fill="#f2f2f2" stroke="#cbcbcb" stroke-width="1"/>
<path d="M8.6 146L13 143.3V148.7ZM13.6 146L18 143.3V148.7Z" fill="#333"/>
<text x="27.4" y="148.8" font-size="10.2" fill="#5c5c5c" textLength="61.5" lengthAdjust="spacingAndGlyphs" >NAVEGADOR</text>
<circle cx="269.4" cy="145.7" r="4.4" fill="#1a1a1a"/><rect x="266.8" y="145" width="5.2" height="1.4" fill="#fff"/>
<rect x="37.7" y="162.2" width="153.2" height="18.6" fill="#f0f0f0"/>
<path d="M29.8 166.6V176.6H19.8Z" fill="#9a9a9a" stroke="#222" stroke-width="1.1" stroke-linejoin="round"/>
<path d="M40.1 171.8Q47.7 163.20000000000002 55.300000000000004 171.8Q47.7 180.4 40.1 171.8Z" fill="#9a9a9a"/>
<circle cx="47.7" cy="171.8" r="3.1" fill="#efefef"/><circle cx="47.7" cy="171.8" r="1.7" fill="#9a9a9a"/>
<rect x="60.9" y="164.2" width="106.8" height="14.8" fill="#8d8d8d"/>
<path d="M64.6 168.6L67.6 165H78V175L75 178.4H64.6Z" fill="#fff" stroke="#333" stroke-width="1" stroke-linejoin="round"/><path d="M65.4 169.2H74.4V177.6H65.4Z" fill="#dfe2ea"/><path d="M74.6 168.8L77.6 165.4V175L74.6 178Z" fill="#f4f4f4"/><path d="M64.6 168.6H74.6V178.2M74.6 168.6L77.8 165.2" fill="none" stroke="#555" stroke-width="0.7"/>
<text x="92.3" y="175.6" font-size="10.6" fill="#fff" textLength="65.9" lengthAdjust="spacingAndGlyphs" font-weight="bold" >(Sin guardar)</text>
<circle cx="177.4" cy="172" r="5.7" fill="#fff" stroke="#222" stroke-width="1.1"/><circle cx="177.4" cy="172" r="2.3" fill="#222"/>
<rect x="54.4" y="184.4" width="170.4" height="19.6" fill="#f0f0f0"/>
<path d="M37.9 188.39999999999998L45.9 194.2L37.9 200.0Z" fill="#fff" stroke="#2e2e2e" stroke-width="1.4" stroke-linejoin="round"/>
<path d="M69.97 192.34L72.05 192.49L72.05 195.51L69.97 195.66L69.57 196.62L70.93 198.20L68.80 200.33L67.22 198.97L66.26 199.37L66.11 201.45L63.09 201.45L62.94 199.37L61.98 198.97L60.40 200.33L58.27 198.20L59.63 196.62L59.23 195.66L57.15 195.51L57.15 192.49L59.23 192.34L59.63 191.38L58.27 189.80L60.40 187.67L61.98 189.03L62.94 188.63L63.09 186.55L66.11 186.55L66.26 188.63L67.22 189.03L68.80 187.67L70.93 189.80L69.57 191.38Z" fill="#999"/><circle cx="64.6" cy="194.0" r="2.74" fill="#f0f0f0"/>
<text x="85.4" y="197.89999999999998" font-size="10.6" fill="#222" textLength="130.9" lengthAdjust="spacingAndGlyphs" >Configuración del documento</text>
<rect x="54.4" y="207.0" width="121.0" height="19.6" fill="#f0f0f0"/>
<path d="M37.9 211.0L45.9 216.8L37.9 222.60000000000002Z" fill="#fff" stroke="#2e2e2e" stroke-width="1.4" stroke-linejoin="round"/>
<path d="M57 210.4H63.4V212.6H72.2V222.20000000000002H57Z" fill="#969696"/>
<path d="M63.6 211.0V212.4H72" stroke="#dcdcdc" stroke-width="0.7" fill="none"/>
<text x="85.6" y="220.5" font-size="10.6" fill="#222" textLength="80.0" lengthAdjust="spacingAndGlyphs" >Vistas guardadas</text>
<rect x="54.4" y="229.4" width="92.5" height="19.6" fill="#f0f0f0"/>
<path d="M37.9 233.39999999999998L45.9 239.2L37.9 245.0Z" fill="#fff" stroke="#2e2e2e" stroke-width="1.4" stroke-linejoin="round"/>
<path d="M57.4 239.2Q64.8 231.0 72.2 239.2Q64.8 247.39999999999998 57.4 239.2Z" fill="none" stroke="#a8a8a8" stroke-width="1"/>
<circle cx="64.8" cy="239.2" r="2.6" fill="none" stroke="#a8a8a8" stroke-width="1"/>
<path d="M59.199999999999996 234.79999999999998L70.39999999999999 244.0M61.199999999999996 234.0L72.0 243.0" stroke="#a8a8a8" stroke-width="0.9"/>
<path d="M80.7 232.79999999999998H87.10000000000001V234.99999999999997H95.9V244.6H80.7Z" fill="#969696"/>
<path d="M87.3 233.39999999999998V234.79999999999998H95.7" stroke="#dcdcdc" stroke-width="0.7" fill="none"/>
<text x="108.8" y="242.89999999999998" font-size="10.6" fill="#222" textLength="29.8" lengthAdjust="spacingAndGlyphs" >Origen</text>
<rect x="54.4" y="251.9" width="103.2" height="19.6" fill="#f0f0f0"/>
<path d="M37.9 255.89999999999998L45.9 261.7L37.9 267.5Z" fill="#fff" stroke="#2e2e2e" stroke-width="1.4" stroke-linejoin="round"/>
<path d="M57.199999999999996 261.7Q64.8 253.1 72.39999999999999 261.7Q64.8 270.3 57.199999999999996 261.7Z" fill="#9a9a9a"/>
<circle cx="64.8" cy="261.7" r="3.1" fill="#efefef"/><circle cx="64.8" cy="261.7" r="1.7" fill="#9a9a9a"/>
<path d="M80.7 255.29999999999998H87.10000000000001V257.5H95.9V267.09999999999997H80.7Z" fill="#969696"/>
<path d="M87.3 255.89999999999998V257.29999999999995H95.7" stroke="#dcdcdc" stroke-width="0.7" fill="none"/>
<text x="108.8" y="265.4" font-size="10.6" fill="#222" textLength="38.4" lengthAdjust="spacingAndGlyphs" >Cuerpos</text>
<rect x="54.4" y="274.3" width="100.1" height="19.6" fill="#f0f0f0"/>
<path d="M37.9 278.3L45.9 284.1L37.9 289.90000000000003Z" fill="#fff" stroke="#2e2e2e" stroke-width="1.4" stroke-linejoin="round"/>
<path d="M57.199999999999996 284.1Q64.8 275.5 72.39999999999999 284.1Q64.8 292.70000000000005 57.199999999999996 284.1Z" fill="#9a9a9a"/>
<circle cx="64.8" cy="284.1" r="3.1" fill="#efefef"/><circle cx="64.8" cy="284.1" r="1.7" fill="#9a9a9a"/>
<path d="M80.7 277.70000000000005H87.10000000000001V279.90000000000003H95.9V289.50000000000006H80.7Z" fill="#969696"/>
<path d="M87.3 278.30000000000007V279.70000000000005H95.7" stroke="#dcdcdc" stroke-width="0.7" fill="none"/>
<text x="108.8" y="287.8" font-size="10.6" fill="#222" textLength="37.4" lengthAdjust="spacingAndGlyphs" >Bocetos</text>
<rect x="4.5" y="601.5" width="280" height="21.5" fill="#f2f2f2" stroke="#cbcbcb" stroke-width="1"/>
<text x="27.3" y="615.5" font-size="10.2" fill="#5c5c5c" textLength="68.3" lengthAdjust="spacingAndGlyphs" >COMENTARIOS</text>
<circle cx="269" cy="612" r="4.4" fill="#1a1a1a"/><path d="M266.4 612H271.6M269 609.4V614.6" stroke="#fff" stroke-width="1.3"/>
<rect x="529.5" y="600" width="221.8" height="22" fill="#f0f0f0"/>
<path d="M537.6 609Q532.4 609.9 532.4 612.3Q532.8 615.7 540 615.7Q547 615.5 547.2 612.2Q547 609.9 543.2 609" fill="none" stroke="#333" stroke-width="1.4"/><path d="M533.4 615.8L536.6 612.2L537.6 617.2Z" fill="#333"/>
<path d="M539.5 618.4V607H538.2L540.4 603L542.6 607H541.3V618.4Z" fill="#fff" stroke="#333" stroke-width="0.8" stroke-linejoin="round"/>
<path d="M552.1 609.1H557.6L554.85 612.3Z" fill="#2a2a2a"/>
<rect x="563.4" y="608.6" width="14.2" height="9.6" fill="#f6f6f6" stroke="#333" stroke-width="1.1"/><rect x="566.4" y="611.4" width="8.4" height="4" fill="#8a8f9a" stroke="#444" stroke-width="0.8"/><path d="M565 608.4L569.4 603.6V606.4L574.4 604.2L574.6 608.4" fill="#999" stroke="#333" stroke-width="0.9" stroke-linejoin="round"/>
<path d="M591.6 618.4Q589.4 614.6 587.8 612.4Q587.4 611 588.8 610.8Q590.2 611.2 591.4 613.2V606.2Q591.6 605 592.6 605Q593.6 605 593.6 606.2V604.6Q593.8 603.4 594.8 603.4Q595.9 603.4 596 604.6V605.2Q596.2 604.2 597.2 604.2Q598.3 604.2 598.4 605.4V606.6Q598.6 605.8 599.5 605.8Q600.6 605.8 600.6 607V613.4Q600.4 616.4 598.6 618.4Z" fill="#f4f6f8" stroke="#333" stroke-width="1" stroke-linejoin="round"/><path d="M593.6 606.2V610.6M596 605.2V610.4M598.4 606.6V610.8" stroke="#333" stroke-width="0.8"/>
<circle cx="616.8" cy="609.6" r="4.6" fill="#e4eef0" stroke="#333" stroke-width="1.2"/><path d="M620.2 613L623.4 616.4" stroke="#333" stroke-width="2.3" stroke-linecap="round"/><path d="M622.6 605.6H626.8M624.7 603.6V607.6M622.8 609.6H626.8" stroke="#333" stroke-width="0.9"/>
<circle cx="642.2" cy="609.4" r="5.6" fill="#e6eef0" stroke="#333" stroke-width="1.2"/><rect x="639.8" y="607" width="5" height="4.8" fill="#fff" stroke="#555" stroke-width="0.8"/><path d="M646.4 613.8L650.4 617.6" stroke="#333" stroke-width="2.4" stroke-linecap="round"/>
<path d="M656.2 609.1H661.7L658.95 612.3Z" fill="#2a2a2a"/>
<rect x="667.6" y="603.8" width="13.8" height="11.4" rx="1" fill="#e8e8e8" stroke="#444" stroke-width="1"/><rect x="669.6" y="605.8" width="9.8" height="7.4" fill="#8fb3e4" stroke="#2c4f8c" stroke-width="0.8"/><path d="M671.6 615.4V617.6H677.6V615.4" fill="#f4f4f4" stroke="#555" stroke-width="0.9"/>
<path d="M684.4 609.1H689.9L687.15 612.3Z" fill="#2a2a2a"/>
<defs><linearGradient id="lg_grid" x1="0" y1="0" x2="0" y2="1"><stop offset="0" stop-color="#ffffff"/><stop offset="1" stop-color="#8e97a8"/></linearGradient></defs>
<rect x="696.2" y="603.6" width="14.4" height="14.6" fill="url(#lg_grid)" stroke="#555" stroke-width="0.9"/>
<path d="M699.08 603.6V618.2M696.2 606.52H710.6M701.96 603.6V618.2M696.2 609.44H710.6M704.84 603.6V618.2M696.2 612.36H710.6M707.72 603.6V618.2M696.2 615.28H710.6" stroke="#555" stroke-width="0.8"/>
<path d="M713.4 609.1H718.8L716.0999999999999 612.3Z" fill="#2a2a2a"/>
<rect x="725.2" y="604.4" width="13.8" height="12.6" rx="1" fill="#3f62a6"/>
<rect x="726.2" y="605.4" width="5.3" height="4.7" fill="#86a5d8"/>
<rect x="732.7" y="605.4" width="5.3" height="4.7" fill="#86a5d8"/>
<rect x="726.2" y="611.3" width="5.3" height="4.7" fill="#86a5d8"/>
<rect x="732.7" y="611.3" width="5.3" height="4.7" fill="#86a5d8"/>
<path d="M742.2 609.1H747.7L744.95 612.3Z" fill="#2a2a2a"/>
<rect x="0" y="628" width="1280" height="41" fill="#f2f2f2"/>
<rect x="0" y="628" width="1280" height="1" fill="#d2d2d2"/>
<rect x="10.2" y="644.6" width="1.9" height="13.2" fill="#474747"/><path d="M12.7 651.2L21.9 645.3V657.1Z" fill="#474747"/>
<path d="M33 651.2L41.9 645.3V657.1Z" fill="#474747"/><rect x="43.1" y="648.4" width="1.9" height="5.6" fill="#474747"/>
<path d="M57.2 644V658.6L68 651.3Z" fill="#474747"/>
<rect x="79.6" y="648.4" width="1.7" height="5.6" fill="#474747"/><path d="M91.4 651.2L82.4 645.3V657.1Z" fill="#474747"/>
<path d="M113 651.2L103.9 645.3V657.1Z" fill="#474747"/><rect x="113" y="644.6" width="2.1" height="13.2" fill="#474747"/>
<rect x="138.4" y="644.2" width="11.4" height="11.4" fill="#fff"/>
<path d="M140 643.8H148.2M138 645.6V654.2M150.1 645.6V649.4M140 655.9H144.4" stroke="#666" stroke-width="1.1"/>
<rect x="136.9" y="642.7" width="2" height="2" fill="#0a84ff"/>
<rect x="149.1" y="642.7" width="2" height="2" fill="#0a84ff"/>
<rect x="136.9" y="654.9" width="2" height="2" fill="#0a84ff"/>
<path d="M145.2 655.2L149.7 650.7L151.5 652.5L147 657Z" fill="#fbb52e"/><path d="M149.7 650.7L150.6 649.8Q151.6 649.2 152.3 650.1Q152.9 650.9 152.3 651.7L151.5 652.5Z" fill="#f23a3a"/><path d="M145.2 655.2L147 657L144.4 657.8Z" fill="#777"/>
<path d="M159.2 655.8H167.9L170.8 653V654.6L167.9 657.5H159.2Z" fill="#b8b8b8"/>
<polygon points="159.2,646.2 167.9,646.2 167.9,654.7 159.2,654.7" fill="#69afe5" />
<polygon points="159.2,646.2 162.1,643 170.8,643 167.9,646.2" fill="#8ccbf8" />
<polygon points="167.9,646.2 170.8,643 170.8,651.7 167.9,654.7" fill="#4a92cc" />
<path d="M172.8 645.6V654.6" stroke="#555" stroke-width="1.1"/><circle cx="172.8" cy="645" r="0.9" fill="#222"/>
<path d="M144.9 661V666H167.1V661" fill="none" stroke="#cdcdcd" stroke-width="1.4"/>
<path d="M172.4 637.2H183.9V639.8L179.2 645V666.9H177V645L172.4 639.8Z" fill="#555"/>
<path d="M1265.67 649.64L1267.75 649.79L1267.75 652.81L1265.67 652.96L1265.27 653.92L1266.63 655.50L1264.50 657.63L1262.92 656.27L1261.96 656.67L1261.81 658.75L1258.79 658.75L1258.64 656.67L1257.68 656.27L1256.10 657.63L1253.97 655.50L1255.33 653.92L1254.93 652.96L1252.85 652.81L1252.85 649.79L1254.93 649.64L1255.33 648.68L1253.97 647.10L1256.10 644.97L1257.68 646.33L1258.64 645.93L1258.79 643.85L1261.81 643.85L1261.96 645.93L1262.92 646.33L1264.50 644.97L1266.63 647.10L1265.27 648.68Z" fill="#8a8a8a"/><circle cx="1260.3" cy="651.3" r="2.74" fill="#f2f2f2"/>
</svg>
</body></html>
